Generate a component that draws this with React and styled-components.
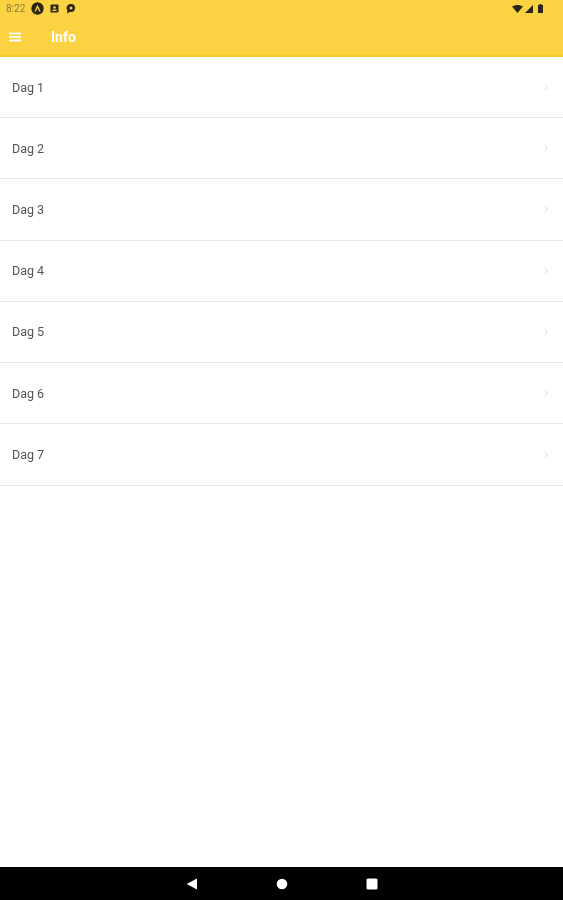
import React from 'react'
import styled, { createGlobalStyle } from 'styled-components'

const days = ['Dag 1', 'Dag 2', 'Dag 3', 'Dag 4', 'Dag 5', 'Dag 6', 'Dag 7']

const App = () => (
  <>
    <GlobalStyle />
    <Screen>
      <Header>
        <StatusBar>
          <StatusLeft>
            <Time>8:22</Time>
            <svg width="13" height="13" viewBox="0 0 13 13">
              <circle cx="6.5" cy="6.5" r="6.2" fill="#2b2616" />
              <path d="M6.5 2.8 9.6 9.6H8.2L6.5 6 4.8 9.6H3.4z" fill="#fad242" />
            </svg>
            <svg width="9" height="9" viewBox="0 0 9 9">
              <rect x="0.5" y="0.5" width="8" height="8" rx="1" fill="#2b2616" />
              <circle cx="4.5" cy="3.5" r="1.3" fill="#fad242" />
              <rect x="2.4" y="5.6" width="4.2" height="1.4" fill="#fad242" />
            </svg>
            <svg width="11" height="11" viewBox="0 0 11 11">
              <path d="M6 1a4 4 0 0 1 0 8H4.6L2 10.5l.5-3A4 4 0 0 1 6 1z" fill="#2b2616" />
              <circle cx="6" cy="5" r="1.5" fill="#fad242" />
            </svg>
          </StatusLeft>
          <StatusRight>
            <svg width="11" height="8" viewBox="0 0 11 8">
              <path d="M0 1.6C3.2-.5 7.8-.5 11 1.6L5.500 8z" fill="#2b2616" />
            </svg>
            <SignalIcon width="8" height="8" viewBox="0 0 8 8">
              <path d="M8 0v8H0z" fill="#2b2616" />
            </SignalIcon>
            <svg width="5" height="9" viewBox="0 0 5 9">
              <path d="M1.500 0h2v1H5v8H0V1h1.500z" fill="#2b2616" />
            </svg>
          </StatusRight>
        </StatusBar>
        <Toolbar>
          <svg width="12" height="10" viewBox="0 0 12 10">
            <rect y="0.5" width="12" height="2" fill="#fff" opacity="0.9" />
            <rect y="4" width="12" height="2" fill="#fff" opacity="0.9" />
            <rect y="7.500" width="12" height="2" fill="#fff" opacity="0.9" />
          </svg>
          <Title>Info</Title>
        </Toolbar>
      </Header>
      <List>
        {days.map((day) => (
          <Row key={day}>
            <RowLabel>{day}</RowLabel>
            <svg width="4" height="7" viewBox="0 0 4 7">
              <path d="M.7.7 3.300 3.500.7 6.300" fill="none" stroke="#d8d8d8" strokeWidth="1" />
            </svg>
          </Row>
        ))}
      </List>
      <NavBar>
        <svg width="12" height="12" viewBox="0 0 12 12">
          <path d="M11 .5v11L.7 6z" fill="#fff" />
        </svg>
        <svg width="12" height="12" viewBox="0 0 12 12">
          <circle cx="6" cy="6" r="5.300" fill="#fff" />
        </svg>
        <svg width="12" height="12" viewBox="0 0 12 12">
          <rect x="0.500" y="0.500" width="11" height="11" rx="1.500" fill="#fff" />
        </svg>
      </NavBar>
    </Screen>
  </>
)

export default App

const GlobalStyle = createGlobalStyle`
  html, body {
    margin: 0;
    padding: 0;
    background: #fff;
    font-family: Roboto, "Liberation Sans", sans-serif;
  }
`

const Screen = styled.div`
  width: 563px;
  height: 900px;
  display: flex;
  flex-direction: column;
  overflow: hidden;
  background: #fff;
`

const Header = styled.header`
  height: 57px;
  box-sizing: border-box;
  display: flex;
  flex-direction: column;
  background: #fad242;
  border-bottom: 2px solid #f5cb2c;
`

const StatusBar = styled.div`
  height: 17px;
  padding: 0 20px 0 6px;
  display: flex;
  align-items: center;
  justify-content: space-between;
`

const StatusLeft = styled.div`
  display: flex;
  align-items: center;
  gap: 6px;
  svg { filter: blur(0.5px); }
`

const StatusRight = styled.div`
  display: flex;
  align-items: center;
  gap: 2px;
  svg { filter: blur(0.5px); }
`

const SignalIcon = styled.svg`
  margin-right: 3px;
`

const Time = styled.span`
  font-size: 10px;
  color: #8a7a3a;
  filter: blur(0.5px);
`

const Toolbar = styled.div`
  flex: 1;
  display: flex;
  align-items: center;
  padding: 2px 0 0 9px;
  gap: 30px;
  svg { filter: blur(0.5px); }
`

const Title = styled.span`
  font-size: 14px;
  font-weight: 700;
  color: #fff;
  filter: blur(0.5px);
`

const List = styled.main`
  flex: 1;
`

const Row = styled.div`
  height: 61.22px;
  box-sizing: border-box;
  padding: 0 15px 0 12px;
  display: flex;
  align-items: center;
  justify-content: space-between;
  border-bottom: 1px solid #e8e8e8;
  svg { filter: blur(0.5px); }
`

const RowLabel = styled.span`
  font-size: 12.5px;
  color: #555;
  filter: blur(0.5px);
`

const NavBar = styled.nav`
  height: 33px;
  background: #000;
  display: flex;
  align-items: center;
  justify-content: center;
  gap: 78px;
  svg { filter: blur(0.5px); }
`
